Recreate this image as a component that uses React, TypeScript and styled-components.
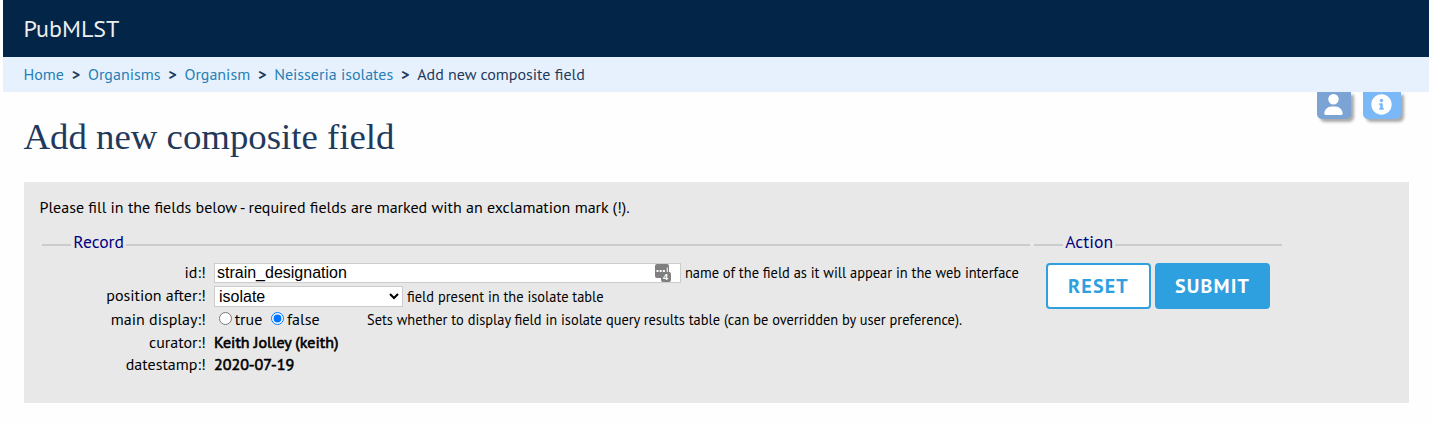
import React from 'react';
import styled, { createGlobalStyle } from 'styled-components';
import { FaUser } from 'react-icons/fa6';
import { FaInfoCircle } from 'react-icons/fa';

const Global = createGlobalStyle`
  *, *::before, *::after { box-sizing: border-box; }
  body {
    margin: 0;
    background: #fefefe;
    color: #000;
    font: 16px/22px "PT Sans", "Noto Sans", sans-serif;
  }
`;

const Page = styled.div`
  min-height: 425px;
  padding: 0 3px;
  overflow: hidden;
`;

const Header = styled.header`
  height: 57px;
  padding: 0 20.5px;
  display: flex;
  align-items: center;
  background: #032547;
  color: #eee;
  font-size: 24px;
`;

const Breadcrumb = styled.nav`
  height: 35px;
  padding: 0 20.5px 2px;
  display: flex;
  align-items: center;
  gap: 7.8px;
  background: #e7f1fe;
  color: #1f3a5c;
`;

const Crumb = styled.a`
  color: #267fb5;
  text-decoration: none;
`;

const Separator = styled.span`
  font-weight: 700;
`;

const Main = styled.main`
  padding: 0 20px 0 21px;
`;

const TitleRow = styled.div`
  height: 90px;
  display: flex;
  justify-content: space-between;
`;

const Title = styled.h1`
  margin: 0 0 0 -0.5px;
  padding-top: 25px;
  font: 400 36.8px/40px "Liberation Serif", serif;
  color: #1f3a5c;
`;

const Triggers = styled.div`
  display: flex;
  gap: 12px;
  padding-right: 8px;
`;

const Trigger = styled.button<{ $bg: string; $w: number }>`
  width: ${p => p.$w}px;
  height: 27px;
  padding: 0 1px 2px 0;
  border: 0;
  border-radius: 0 0 5px 5px;
  background: ${p => p.$bg};
  color: #fff;
  font-size: 21px;
  display: flex;
  align-items: center;
  justify-content: center;
  box-shadow: 3px 3px 3px #aaa;
`;

const Panel = styled.section`
  height: 221px;
  padding: 14px 16px 14px 15.5px;
  background: #e8e8e8;
`;

const Intro = styled.p`
  margin: 0 0 12px;
`;

const Fieldsets = styled.div`
  display: flex;
  align-items: flex-start;
  gap: 4px;
  padding-left: 2.5px;
`;

const Fieldset = styled.fieldset<{ $w: number }>`
  width: ${p => p.$w}px;
  min-width: 0;
  margin: 0;
  padding: 3px 12px 0;
  border: 0;
  border-top: 2px solid #ccc;
`;

const Legend = styled.legend`
  margin-left: 17.3px;
  padding: 0 2px;
  color: navy;
  font-size: 17.6px;
  line-height: 24px;
  height: 30px;
`;

const Row = styled.div<{ $h: number }>`
  height: ${p => p.$h}px;
  display: flex;
  align-items: center;
  white-space: nowrap;
`;

const Rows = styled.div`
  margin-top: -2px;
`;

const Label = styled.label<{ $raise?: boolean }>`
  flex: none;
  width: 151.8px;
  margin-right: 8.2px;
  padding-bottom: ${p => (p.$raise ? 2 : 0)}px;
  text-align: right;
`;

const Hint = styled.span<{ $drop?: boolean }>`
  margin-left: 4px;
  padding-top: ${p => (p.$drop ? 2 : 0)}px;
  font-size: 14.42px;
`;

const InputWrap = styled.span`
  position: relative;
  display: flex;
  flex: none;
`;

const TextInput = styled.input`
  width: 467px;
  height: 20px;
  padding: 1px 2px;
  border: 1px solid #ccc;
  background: #fff;
  font: 16px "Liberation Sans", sans-serif;
`;

const ManagerBadge = styled.svg`
  position: absolute;
  right: 9px;
  top: 1px;
`;

const Select = styled.select`
  width: 189px;
  height: 21px;
  padding: 0;
  border: 1px solid #ccc;
  background: #fff;
  font: 16px "Liberation Sans", sans-serif;
`;

const Radios = styled.div`
  width: 149px;
  display: flex;
  align-items: center;
  padding-bottom: 2px;
`;

const Radio = styled.input`
  margin: -1px 2.7px 0 5px;
  width: 13px;
  height: 13px;

  span + & { margin-left: 9px; }
`;

const Fixed = styled.span`
  -webkit-text-stroke: 0.6px #000;
`;

const Buttons = styled.div`
  display: flex;
  gap: 4px;
`;

const Button = styled.button<{ $primary?: boolean }>`
  width: ${p => (p.$primary ? 115 : 105)}px;
  height: 46px;
  padding: 0;
  border: 2px solid #2e9fdf;
  border-radius: 4px;
  background: ${p => (p.$primary ? '#2e9fdf' : '#fff')};
  color: ${p => (p.$primary ? '#fff' : '#2e9fdf')};
  font: 700 20px "PT Sans", "Noto Sans", sans-serif;
  letter-spacing: 1.2px;
`;

export default function App() {
  return (
    <Page>
      <Global />
      <Header>PubMLST</Header>
      <Breadcrumb>
        {['Home', 'Organisms', 'Organism', 'Neisseria isolates'].map(name => (
          <React.Fragment key={name}>
            <Crumb>{name}</Crumb>
            <Separator>&gt;</Separator>
          </React.Fragment>
        ))}
        <span>Add new composite field</span>
      </Breadcrumb>
      <Main>
        <TitleRow>
          <Title>Add new composite field</Title>
          <Triggers>
            <Trigger $bg="#7ba3d3" $w={34} aria-label="User"><FaUser /></Trigger>
            <Trigger $bg="#7ab8f8" $w={38} aria-label="Information"><FaInfoCircle /></Trigger>
          </Triggers>
        </TitleRow>
        <Panel>
          <Intro>Please fill in the fields below - required fields are marked with an exclamation mark (!).</Intro>
          <Fieldsets>
            <Fieldset $w={988}>
              <Legend>Record</Legend>
              <Rows>
                <Row $h={23}>
                  <Label $raise>id:!</Label>
                  <InputWrap>
                    <TextInput defaultValue="strain_designation" />
                    <ManagerBadge width="17" height="18" viewBox="0 0 17 18">
                      <rect width="14" height="14" rx="2" fill="#7f7f7f" />
                      <path d="M1.5 6h2v2h-2zM4.7 6h2v2h-2zM7.9 6h2v2h-2zM11.8 3.5h1v5h-1z" fill="#fff" />
                      <rect x="6" y="8" width="10" height="10" rx="2" fill="#7f7f7f" />
                      <text x="8" y="16.3" fontSize="9" fontWeight="700" fontFamily="Liberation Sans" fill="#fff">4</text>
                    </ManagerBadge>
                  </InputWrap>
                  <Hint>name of the field as it will appear in the web interface</Hint>
                </Row>
                <Row $h={24}>
                  <Label $raise>position after:!</Label>
                  <Select><option>isolate</option></Select>
                  <Hint $drop>field present in the isolate table</Hint>
                </Row>
                <Row $h={23}>
                  <Label $raise>main display:!</Label>
                  <Radios>
                    <Radio type="radio" name="main" /><span>true</span>
                    <Radio type="radio" name="main" defaultChecked /><span>false</span>
                  </Radios>
                  <Hint>Sets whether to display field in isolate query results table (can be overridden by user preference).</Hint>
                </Row>
                <Row $h={22}><Label>curator:!</Label><Fixed>Keith Jolley (keith)</Fixed></Row>
                <Row $h={22}><Label>datestamp:!</Label><Fixed>2020-07-19</Fixed></Row>
              </Rows>
            </Fieldset>
            <Fieldset $w={248}>
              <Legend>Action</Legend>
              <Buttons>
                <Button type="reset">RESET</Button>
                <Button $primary>SUBMIT</Button>
              </Buttons>
            </Fieldset>
          </Fieldsets>
        </Panel>
      </Main>
    </Page>
  );
}
